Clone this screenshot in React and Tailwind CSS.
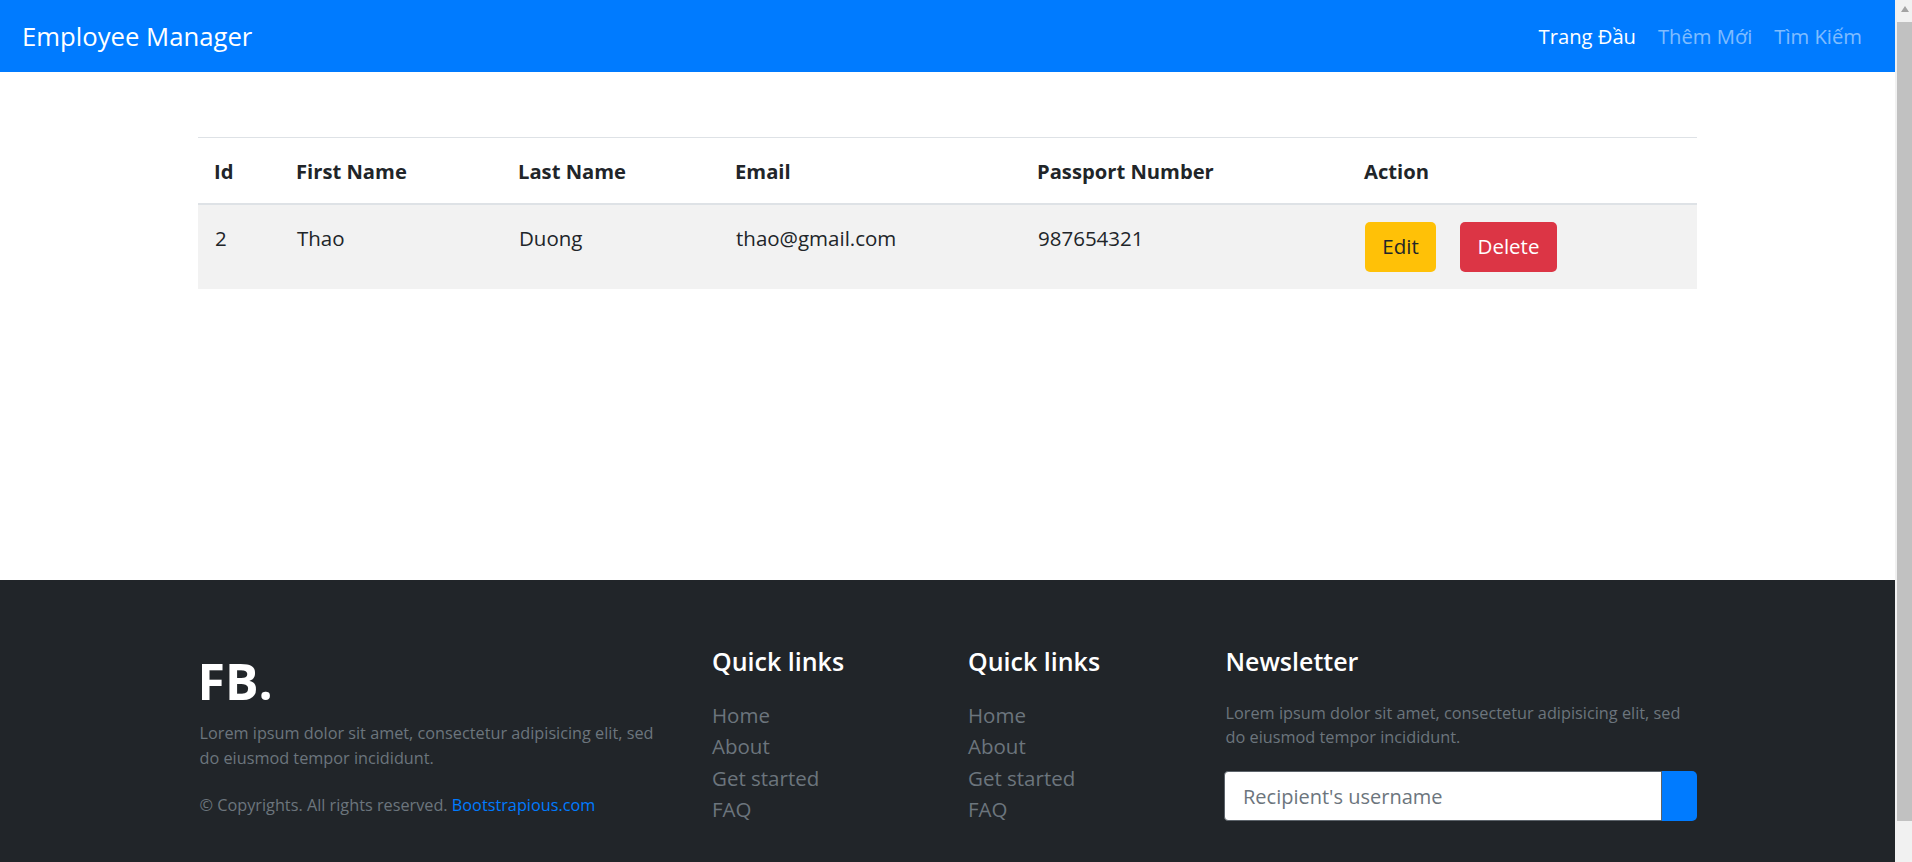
import React from 'react';

const FONT = { fontFamily: '"Open Sans", "Noto Sans", sans-serif' };

const employees = [
  { id: 2, firstName: 'Thao', lastName: 'Duong', email: 'thao@gmail.com', passport: '987654321' },
];

const NavBar = () => (
  <nav className="h-[72px] shrink-0 bg-[#007bff] flex items-center justify-between px-[22px]">
    <span className="text-[25.7px] text-white leading-none pt-[2px]">Employee Manager</span>
    <div className="flex items-center text-[20.2px]">
      <a className="px-[11px] text-white">Trang Đầu</a>
      <a className="px-[11px] text-white/50">Thêm Mới</a>
      <a className="px-[11px] text-white/50">Tìm Kiếm</a>
    </div>
  </nav>
);

const EmployeeTable = () => (
  <div className="h-[508px] shrink-0 bg-white pt-[65px]">
    <table className="table-fixed w-[1499px] mx-auto border-collapse text-[#212529] text-[20.5px] leading-[33.6px]">
      <thead>
        <tr className="border-t border-[#dee2e6] border-b-2 border-b-[#dee2e6]">
          <th className="w-[82px] h-[66.5px] pl-[16px] pt-[17px] align-top text-left font-bold text-[20.2px]">Id</th>
          <th className="w-[222px] pl-[16px] pt-[17px] align-top text-left font-bold text-[20.2px]">First Name</th>
          <th className="w-[217px] pl-[16px] pt-[17px] align-top text-left font-bold text-[20.2px]">Last Name</th>
          <th className="w-[302px] pl-[16px] pt-[17px] align-top text-left font-bold text-[20.2px]">Email</th>
          <th className="w-[327px] pl-[16px] pt-[17px] align-top text-left font-bold text-[20.2px]">Passport Number</th>
          <th className="pl-[16px] pt-[17px] align-top text-left font-bold text-[20.2px]">Action</th>
        </tr>
      </thead>
      <tbody>
        {employees.map((e) => (
          <tr key={e.id} className="bg-[#f2f2f2]">
            <td className="h-[85px] pl-[17px] pt-[17px] align-top">{e.id}</td>
            <td className="pl-[17px] pt-[17px] align-top">{e.firstName}</td>
            <td className="pl-[17px] pt-[17px] align-top">{e.lastName}</td>
            <td className="pl-[17px] pt-[17px] align-top">{e.email}</td>
            <td className="pl-[17px] pt-[17px] align-top">{e.passport}</td>
            <td className="pl-[17px] pt-[17px] align-top">
              <div className="flex items-center gap-[24px]">
                <button className="w-[71px] h-[50px] rounded-[5px] bg-[#ffc107] text-[#212529] text-[20.5px]">Edit</button>
                <button className="w-[97px] h-[50px] rounded-[5px] bg-[#dc3545] text-white text-[20.5px]">Delete</button>
              </div>
            </td>
          </tr>
        ))}
      </tbody>
    </table>
  </div>
);

const QuickLinks = () => (
  <div>
    <h5 className="text-[25px] font-semibold text-white leading-[31px]">Quick links</h5>
    <ul className="mt-[23px] text-[20.5px] leading-[31.4px] text-[#6c757d]">
      <li>Home</li>
      <li>About</li>
      <li>Get started</li>
      <li>FAQ</li>
    </ul>
  </div>
);

const Footer = () => (
  <footer className="flex-1 bg-[#212529] pt-[66px]">
    <div className="w-[1499px] mx-auto grid grid-cols-[514px_256px_256px_473px]">
      <div className="pl-[1.5px]">
        <h1 className="mt-[5px] -ml-[2px] text-[50px] font-bold text-white leading-[60px]">FB.</h1>
        <p className="mt-[10px] text-[16.25px] leading-[25px] text-[#6c757d] whitespace-nowrap">
          Lorem ipsum dolor sit amet, consectetur adipisicing elit, sed
          <br />
          do eiusmod tempor incididunt.
        </p>
        <p className="mt-[22px] text-[16.25px] leading-[25px] text-[#6c757d] whitespace-nowrap">
          © Copyrights. All rights reserved. <a className="text-[#007bff]">Bootstrapious.com</a>
        </p>
      </div>
      <QuickLinks />
      <QuickLinks />
      <div>
        <h5 className="pl-[1.5px] text-[25px] font-semibold text-white leading-[31px]">Newsletter</h5>
        <p className="pl-[1.5px] mt-[23.5px] text-[16.3px] leading-[24.5px] text-[#6c757d] whitespace-nowrap">
          Lorem ipsum dolor sit amet, consectetur adipisicing elit, sed
          <br />
          do eiusmod tempor incididunt.
        </p>
        <div className="mt-[21.5px] flex h-[50px]">
          <input
            className="flex-1 min-w-0 h-full bg-white border border-[#5c636a] rounded-l-[4px] pl-[18px] text-[20px] placeholder:text-[#6c757d] outline-none"
            style={FONT}
            placeholder="Recipient's username"
          />
          <button className="w-[35px] h-full bg-[#007bff] rounded-r-[5px]" />
        </div>
      </div>
    </div>
  </footer>
);

const ScrollBar = () => (
  <div className="w-[17px] shrink-0 bg-[#f1f1f1] flex flex-col">
    <div className="h-[22px] flex justify-center pt-[6px] pl-[3px]">
      <svg width="8" height="6" viewBox="0 0 8 6">
        <path d="M4 0 L8 6 L0 6 Z" fill="#a3a3a3" />
      </svg>
    </div>
    <div className="pl-[2px]">
      <div className="h-[799px] bg-[#c1c1c1]" />
    </div>
  </div>
);

export default function App() {
  return (
    <div className="flex w-[1912px] h-[862px] overflow-hidden" style={FONT}>
      <div className="flex-1 min-w-0 flex flex-col">
        <NavBar />
        <EmployeeTable />
        <Footer />
      </div>
      <ScrollBar />
    </div>
  );
}
